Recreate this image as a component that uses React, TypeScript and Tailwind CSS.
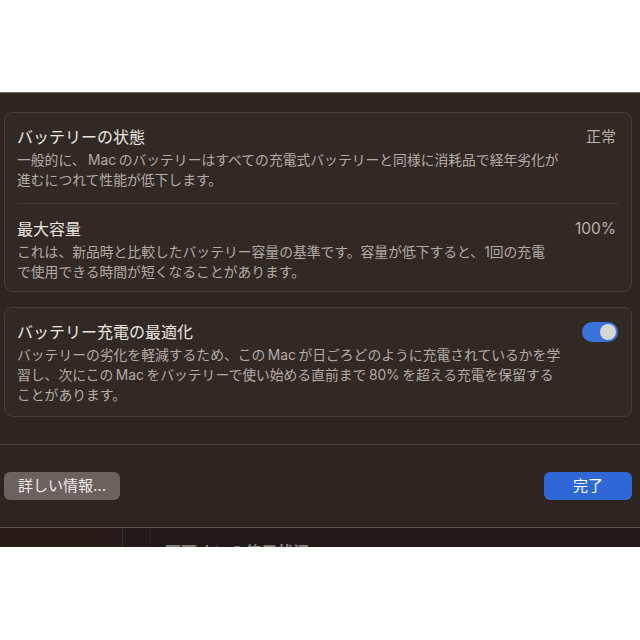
import React from "react";

const font = {
  fontFamily: '"Inter", "Noto Sans CJK JP", sans-serif',
};

function Line({ children }: { children: React.ReactNode }) {
  return (
    <span className="block h-[20px] overflow-visible whitespace-nowrap">
      {children}
    </span>
  );
}

function Row({
  title,
  value,
  lines,
}: {
  title: string;
  value: React.ReactNode;
  lines: React.ReactNode[];
}) {
  return (
    <div>
      <div className="flex h-[20px] items-center justify-between">
        <h2 className="text-[16px] leading-[20px] text-[#ebe6e2]">{title}</h2>
        {value}
      </div>
      <p className="mt-[3px] text-[13.8px] leading-[20px] text-[#b3aca6]">
        {lines.map((l, i) => (
          <Line key={i}>{l}</Line>
        ))}
      </p>
    </div>
  );
}

export default function App() {
  return (
    <div className="flex h-[640px] w-[640px] flex-col bg-white" style={font}>
      <div className="h-[92px] shrink-0 bg-white" />
      <div className="flex h-[455px] shrink-0 flex-col border-t border-[#6e6661] bg-[#2e2520]">
        <div className="pl-[4px] pr-[8px] pt-[19px]">
          <div className="rounded-lg border border-[#473e39] bg-[#322924] pl-[12px] pr-[15px]">
            <div className="pt-[14px] pb-[13px]">
              <Row
                title="バッテリーの状態"
                value={<span className="text-[15px] text-[#b8b1ab]">正常</span>}
                lines={[
                  "一般的に、\u2009Mac\u2009のバッテリーはすべての充電式バッテリーと同様に消耗品で経年劣化が",
                  "進むにつれて性能が低下します。",
                ]}
              />
            </div>
            <div className="mr-[-2px] h-px bg-[#433a35]" />
            <div className="pt-[15px] pb-[9px]">
              <Row
                title="最大容量"
                value={<span className="text-[15.5px] text-[#b8b1ab]">100%</span>}
                lines={[
                  "これは、新品時と比較したバッテリー容量の基準です。容量が低下すると、1回の充電",
                  "で使用できる時間が短くなることがあります。",
                ]}
              />
            </div>
          </div>

          <div className="mt-[15px] rounded-lg border border-[#473e39] bg-[#322924] pl-[12px] pr-[13px] pt-[14px] pb-[11px]">
            <div>
              <div className="flex h-[20px] items-center justify-between">
                <h2 className="text-[16px] leading-[20px] text-[#ebe6e2]">
                  バッテリー充電の最適化
                </h2>
                <div className="flex h-[20px] w-[36px] items-center justify-end rounded-full bg-[#3a72da] pr-[2px]">
                  <div className="h-[16px] w-[16px] rounded-full bg-[#d8d6d4]" />
                </div>
              </div>
              <p className="mt-[3px] text-[13.8px] leading-[20px] text-[#b3aca6]">
                <Line>
                  バッテリーの劣化を軽減するため、この{"\u2009"}Mac{"\u2009"}が日ごろどのように充電されているかを学
                </Line>
                <Line>
                  習し、次にこの{"\u2009"}Mac{"\u2009"}をバッテリーで使い始める直前まで{"\u2009"}80%{"\u2009"}を超える充電を保留する
                </Line>
                <Line>ことがあります。</Line>
              </p>
            </div>
          </div>
        </div>

        <div className="mt-[27px] h-px bg-[#4a423d]" />

        <div className="flex items-center justify-between pl-[4px] pr-[8px] pt-[27px]">
          <button className="h-[28px] w-[116px] rounded-md bg-[#69625e] text-[15px] leading-[28px] text-[#f0ece9]">
            詳しい情報...
          </button>
          <button className="h-[28px] w-[88px] rounded-md bg-[#2f67d6] text-[15px] leading-[28px] text-white">
            完了
          </button>
        </div>

        <div className="mt-auto h-px bg-[#5b534e]" />
        <div className="flex h-[19px] overflow-hidden bg-[#1e1917]">
          <div className="w-[122px] bg-[#2a1b1b]" />
          <div className="w-px bg-[#3a3331]" />
          <div className="w-[28px] border-r border-[#2a2422] bg-[#211b19]" />
          <div className="pl-[14px] pt-[14px] text-[16px] font-bold leading-[20px] text-[#8a8480]">
            画面オンの使用状況
          </div>
        </div>
      </div>
    </div>
  );
}
